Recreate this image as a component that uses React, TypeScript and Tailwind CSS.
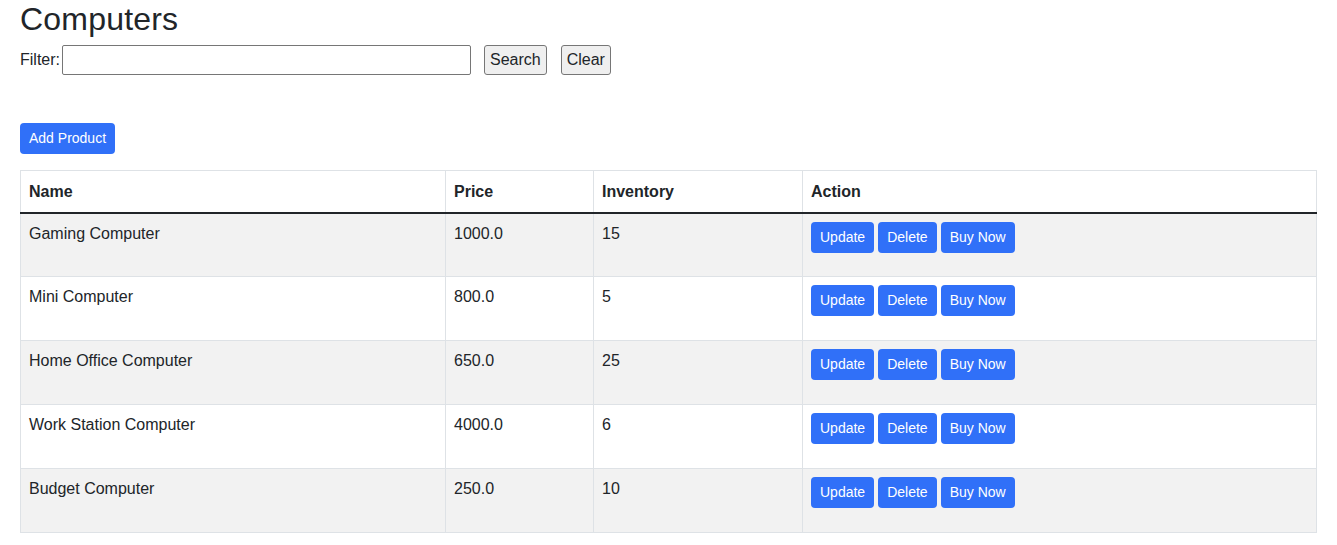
const products = [
  { name: "Gaming Computer", price: "1000.0", inventory: 15 },
  { name: "Mini Computer", price: "800.0", inventory: 5 },
  { name: "Home Office Computer", price: "650.0", inventory: 25 },
  { name: "Work Station Computer", price: "4000.0", inventory: 6 },
  { name: "Budget Computer", price: "250.0", inventory: 10 },
];

const btn = "h-[31px] px-[9px] rounded-[4px] bg-[#3070f8] text-white text-[14px] leading-[21px]";

export default function App() {
  return (
    <div className="min-h-screen bg-white text-[#212529] text-[16px] leading-6 font-['Segoe_UI','Liberation_Sans',Arial,sans-serif]">
      <div className="px-5">
        <h2 className="text-[32px] leading-[38px] font-medium mb-[7px] tracking-[0.2px]">Computers</h2>
        <div className="flex items-center h-[30px]">
          <span className="mr-[2px]">Filter:</span>
          <input className="w-[409px] h-[30px] border border-[#767676] rounded-[2px] px-1 outline-none" />
          <button className="ml-[13px] h-[30px] px-[5px] bg-[#efefef] border border-[#767676] rounded-[3px]">Search</button>
          <button className="ml-[14px] h-[30px] px-[5px] bg-[#efefef] border border-[#767676] rounded-[3px]">Clear</button>
        </div>
        <div className="mt-12">
          <button className={btn}>Add Product</button>
        </div>
        <table className="mt-4 w-full border-collapse border border-[#dee2e6]">
          <thead>
            <tr className="h-[42px] border-b-2 border-b-[#212529]">
              <th className="text-left font-bold px-2 pt-px w-[425px] border-r border-[#dee2e6]">Name</th>
              <th className="text-left font-bold px-2 pt-px w-[148px] border-r border-[#dee2e6]">Price</th>
              <th className="text-left font-bold px-2 pt-px w-[209px] border-r border-[#dee2e6]">Inventory</th>
              <th className="text-left font-bold px-2 pt-px">Action</th>
            </tr>
          </thead>
          <tbody>
            {products.map((p, i) => (
              <tr key={p.name} className={`h-[64px] border-t border-[#dee2e6] ${i % 2 === 0 ? "bg-[#f2f2f2]" : "bg-white"}`}>
                <td className="align-top p-2 border-r border-[#dee2e6]">{p.name}</td>
                <td className="align-top p-2 border-r border-[#dee2e6]">{p.price}</td>
                <td className="align-top p-2 border-r border-[#dee2e6]">{p.inventory}</td>
                <td className="align-top p-2">
                  <div className="flex gap-1">
                    <button className={btn}>Update</button>
                    <button className={btn}>Delete</button>
                    <button className={btn}>Buy Now</button>
                  </div>
                </td>
              </tr>
            ))}
          </tbody>
        </table>
      </div>
    </div>
  );
}
